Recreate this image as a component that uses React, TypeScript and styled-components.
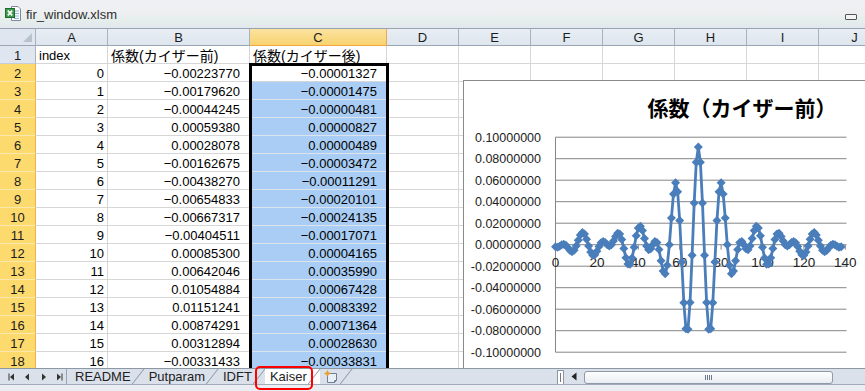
import React from "react";
import styled, { createGlobalStyle } from "styled-components";

const GlobalStyle = createGlobalStyle`
  html, body {
    margin: 0;
    padding: 0;
    background: #fff;
  }
  body {
    font-family: "Liberation Sans", "Noto Sans CJK JP", sans-serif;
    color: #000;
  }
`;

const LETTERS = ["A", "B", "C", "D", "E", "F", "G", "H", "I", "J"];

const B_VALUES = [
  "−0.00223770", "−0.00179620", "−0.00044245", "0.00059380", "0.00028078",
  "−0.00162675", "−0.00438270", "−0.00654833", "−0.00667317", "−0.00404511",
  "0.00085300", "0.00642046", "0.01054884", "0.01151241", "0.00874291",
  "0.00312894", "−0.00331433",
];
const C_VALUES = [
  "−0.00001327", "−0.00001475", "−0.00000481", "0.00000827", "0.00000489",
  "−0.00003472", "−0.00011291", "−0.00020101", "−0.00024135", "−0.00017071",
  "0.00004165", "0.00035990", "0.00067428", "0.00083392", "0.00071364",
  "0.00028630", "−0.00033831",
];

// band-pass coefficients (before kaiser window)
const TAPS = 139;
const MID = 69;
const W0 = 0.5612;
const HALF_BW = Math.PI / 22;
const coef = Array.from({ length: TAPS }, (_, n) => {
  const m = n - MID;
  if (m === 0) return (2 * HALF_BW) / Math.PI;
  return (Math.sin((W0 + HALF_BW) * m) - Math.sin((W0 - HALF_BW) * m)) / (Math.PI * m);
});

const Window = styled.div`
  position: relative;
  width: 865px;
  height: 391px;
  overflow: hidden;
  display: flex;
  flex-direction: column;
  background: #fff;
`;

const TitleBar = styled.div`
  height: 29px;
  flex-shrink: 0;
  box-sizing: border-box;
  display: flex;
  align-items: center;
  gap: 4px;
  padding: 0 8px 1px 5px;
  background: linear-gradient(#eff0f3 0%, #edeff1 50%, #e5eeeb 72%, #e3e7ee 100%);
  border-bottom: 1px solid #98a3b1;
`;

const FileName = styled.span`
  font-size: 13px;
  color: #2e2e2e;
  margin-top: 2px;
`;

const MinButton = styled.div`
  margin-left: auto;
  margin-top: 6px;
  width: 10px;
  height: 4px;
  border: 1px solid #555;
  border-radius: 1px;
  background: #f4f4f4;
`;

const SheetArea = styled.div`
  position: relative;
  height: 339px;
  flex-shrink: 0;
  overflow: hidden;
`;

const Grid = styled.div`
  display: grid;
  grid-template-columns: 36px 72px 142px 137px repeat(7, 72px);
  grid-template-rows: 17px;
  grid-auto-rows: 18px;
  width: max-content;
`;

const Corner = styled.div`
  position: relative;
  box-sizing: border-box;
  background: #dfe6ef;
  border-right: 1px solid #a9b3bf;
  border-bottom: 1px solid #9aa6b3;
  &::after {
    content: "";
    position: absolute;
    right: 3px;
    bottom: 3px;
    border-left: 9px solid transparent;
    border-bottom: 9px solid #b9c3ce;
  }
`;

const ColHead = styled.div<{ $active?: boolean }>`
  box-sizing: border-box;
  font-size: 13px;
  line-height: 16px;
  padding-top: 1px;
  text-align: center;
  color: #1c1c1c;
  background: ${(p) => (p.$active ? "linear-gradient(#fbe3a0, #f8d36f)" : "linear-gradient(#e9eef4, #dde5ee)")};
  border-right: 1px solid ${(p) => (p.$active ? "#e9a84a" : "#a9b3bf")};
  border-bottom: 1px solid ${(p) => (p.$active ? "#f0a83c" : "#9aa6b3")};
`;

const RowHead = styled.div<{ $active?: boolean }>`
  box-sizing: border-box;
  font-size: 13px;
  line-height: 16px;
  padding-top: 2px;
  text-align: center;
  color: #1c1c1c;
  background: ${(p) => (p.$active ? "#fdda6e" : "#dfe6ef")};
  border-right: 1px solid ${(p) => (p.$active ? "#eeb34c" : "#a9b3bf")};
  border-bottom: 1px solid ${(p) => (p.$active ? "#fbe8ae" : "#c5ced8")};
`;

const Cell = styled.div<{ $align?: "left" | "right"; $pad?: number; $fill?: boolean; $jp?: boolean }>`
  box-sizing: border-box;
  white-space: nowrap;
  overflow: visible;
  font-size: ${(p) => (p.$jp ? "14px" : "13px")};
  line-height: 16px;
  padding: 2px ${(p) => p.$pad ?? 3}px 0 3px;
  text-align: ${(p) => p.$align ?? "left"};
  background: ${(p) => (p.$fill ? "#a9cdf4" : "#fff")};
  border-right: 1px solid #d6d6d6;
  border-bottom: 1px solid ${(p) => (p.$fill ? "#dde3ea" : "#d6d6d6")};
`;

const SelectionFrame = styled.div`
  position: absolute;
  left: 249px;
  top: 34px;
  width: 140px;
  height: 400px;
  box-sizing: border-box;
  border: 3px solid #000;
  pointer-events: none;
`;

const ChartBox = styled.div`
  position: absolute;
  left: 463px;
  top: 51px;
  width: 430px;
  height: 310px;
  background: #fff;
  border: 1px solid #8a8a8a;
`;

const ChartTitle = styled.text`
  font-family: "Noto Sans CJK JP", sans-serif;
  font-weight: bold;
  font-size: 21px;
  fill: #000;
`;

const AxisLabel = styled.text<{ $size?: number }>`
  font-family: "Liberation Sans", sans-serif;
  font-size: ${(p) => p.$size ?? 12.5}px;
  fill: #222;
`;

const TabBar = styled.div`
  height: 16px;
  flex-shrink: 0;
  box-sizing: border-box;
  display: flex;
  align-items: stretch;
  background: #dae1ea;
  border-top: 1px solid #8d98a5;
`;

const NavGroup = styled.div`
  width: 67px;
  flex-shrink: 0;
  box-sizing: border-box;
  display: flex;
  align-items: center;
  gap: 9px;
  padding-left: 8px;
  border-right: 1px solid #9aa5b2;
`;

const Tab = styled.div<{ $active?: boolean; $first?: boolean }>`
  position: relative;
  flex-shrink: 0;
  font-size: 13px;
  line-height: 15px;
  color: #222;
  padding: 0 13px 0 ${(p) => (p.$first ? 8 : 5)}px;
  background: ${(p) => (p.$active ? "#fff" : "transparent")};
  &::after {
    content: "";
    position: absolute;
    right: 5px;
    top: -1px;
    bottom: 0;
    width: 1px;
    background: #8894a2;
    transform: skewX(-38deg);
  }
`;

const NewSheet = styled.div`
  position: relative;
  flex-shrink: 0;
  display: flex;
  align-items: center;
  padding: 0 14px 0 4px;
  &::after {
    content: "";
    position: absolute;
    right: 5px;
    top: -1px;
    bottom: 0;
    width: 1px;
    background: #8894a2;
    transform: skewX(-38deg);
  }
`;

const Spacer = styled.div`
  flex: 1;
`;

const HScroll = styled.div`
  width: 308px;
  flex-shrink: 0;
  display: flex;
  align-items: center;
`;

const SplitHandle = styled.div`
  width: 5px;
  height: 13px;
  margin-top: 1px;
  border: 1px solid #8b96a3;
  background: #fff;
  display: flex;
  justify-content: center;
  &::before {
    content: "";
    width: 1px;
    margin: 2px 0;
    background: #777;
  }
`;

const ArrowBtn = styled.div`
  width: 19px;
  display: flex;
  justify-content: center;
`;

const Thumb = styled.div`
  width: 249px;
  height: 13px;
  margin-left: 1px;
  margin-top: 1px;
  box-sizing: border-box;
  border: 1px solid #8e9aa8;
  border-radius: 3px;
  background: linear-gradient(#fdfdfe, #e9edf2);
  display: flex;
  justify-content: center;
  align-items: center;
  gap: 1px;
`;

const GripLine = styled.div`
  width: 1px;
  height: 5px;
  background: #6d7785;
`;

const BottomStrip = styled.div`
  flex: 1;
  background: #eaeef3;
  border-top: 1px solid #a3adb9;
`;

const Highlight = styled.div`
  position: absolute;
  left: 255px;
  top: 366px;
  width: 58px;
  height: 24px;
  box-sizing: border-box;
  border: 2.5px solid #ff0000;
  border-radius: 5px;
  pointer-events: none;
`;

function ExcelIcon() {
  return (
    <svg width="17" height="17" viewBox="0 0 17 17">
      <path d="M6.5 1.5 H13 L15.5 4 V15.5 H6.5 Z" fill="#fff" stroke="#7b8aa0" />
      <path d="M9 6 H14 M9 8.5 H14 M9 11 H14 M9 13.5 H14" stroke="#8fb2d8" />
      <rect x="0.5" y="3.5" width="9" height="9" fill="#3f9b4c" stroke="#1f6b2e" />
      <path d="M2.8 5.6 L7.2 10.4 M7.2 5.6 L2.8 10.4" stroke="#fff" strokeWidth="1.6" />
    </svg>
  );
}

function NavIcon({ kind }: { kind: "first" | "prev" | "next" | "last" }) {
  const left = kind === "first" || kind === "prev";
  const bar = kind === "first" || kind === "last";
  return (
    <svg width="7" height="8" viewBox="0 0 7 8">
      {left ? <path d={bar ? "M6 0.5 L2 4 L6 7.5 Z" : "M5 0.5 L1 4 L5 7.5 Z"} fill="#333" /> : <path d={bar ? "M1 0.5 L5 4 L1 7.5 Z" : "M2 0.5 L6 4 L2 7.5 Z"} fill="#333" />}
      {bar && <rect x={left ? 0.5 : 5.5} y="0.5" width="1" height="7" fill="#333" />}
    </svg>
  );
}

function NewSheetIcon() {
  return (
    <svg width="14" height="13" viewBox="0 0 14 13">
      <path d="M3.5 3.5 H12.5 V10.5 L10.5 12.5 H3.5 Z" fill="#e9eff6" stroke="#6f7f95" />
      <path d="M10.5 12.5 V10.5 H12.5" fill="none" stroke="#6f7f95" />
      <path d="M3.5 0.5 L4.3 2.6 L6.5 3.5 L4.3 4.4 L3.5 6.5 L2.7 4.4 L0.5 3.5 L2.7 2.6 Z" fill="#f6a623" stroke="#d4861a" strokeWidth="0.5" />
    </svg>
  );
}

function Chart() {
  const xp = (i: number) => 91.5 + i * 2.07;
  const yp = (v: number) => 163.7 - v * 1075;
  const grid = Array.from({ length: 11 }, (_, k) => (5 - k) * 2);
  const ticks = Array.from({ length: 8 }, (_, j) => j * 20);
  const pts = coef.map((v, i) => `${xp(i).toFixed(2)},${yp(v).toFixed(2)}`).join(" ");
  return (
    <ChartBox>
      <svg width="430" height="310">
        <ChartTitle x="278" y="35" textAnchor="middle">係数（カイザー前）</ChartTitle>
        {grid.map((g) => (
          <g key={g}>
            <line x1="91.5" x2="382.5" y1={yp(g / 100)} y2={yp(g / 100)} stroke="#868686" strokeWidth="1" />
            <AxisLabel x="77" y={yp(g / 100) + 4.5} textAnchor="end">
              {(g / 100).toFixed(8)}
            </AxisLabel>
          </g>
        ))}
        <line x1="91.5" x2="91.5" y1={yp(0.1)} y2={yp(-0.1)} stroke="#868686" strokeWidth="1" />
        {ticks.map((t) => (
          <g key={t}>
            <line x1={xp(t)} x2={xp(t)} y1={yp(0)} y2={yp(0) + 5} stroke="#868686" strokeWidth="1" />
            <AxisLabel $size={13.5} x={xp(t)} y={yp(0) + 22} textAnchor="middle">
              {t}
            </AxisLabel>
          </g>
        ))}
        <polyline points={pts} fill="none" stroke="#4a7ebb" strokeWidth="2.8" strokeLinejoin="round" />
        {coef.map((v, i) => {
          const x = xp(i);
          const y = yp(v);
          return <path key={i} d={`M${x} ${y - 4.5} L${x + 4.5} ${y} L${x} ${y + 4.5} L${x - 4.5} ${y} Z`} fill="#4a7ebb" />;
        })}
      </svg>
    </ChartBox>
  );
}

export default function App() {
  return (
    <Window>
      <GlobalStyle />
      <TitleBar>
        <ExcelIcon />
        <FileName>fir_window.xlsm</FileName>
        <MinButton />
      </TitleBar>

      <SheetArea>
        <Grid>
          <Corner />
          {LETTERS.map((l) => (
            <ColHead key={l} $active={l === "C"}>
              {l}
            </ColHead>
          ))}

          <RowHead>1</RowHead>
          <Cell>index</Cell>
          <Cell $jp>係数(カイザー前)</Cell>
          <Cell $jp>係数(カイザー後)</Cell>
          {LETTERS.slice(3).map((l) => (
            <Cell key={l} />
          ))}

          {B_VALUES.map((b, i) => (
            <React.Fragment key={i}>
              <RowHead $active>{i + 2}</RowHead>
              <Cell $align="right">{i}</Cell>
              <Cell $align="right" $pad={9}>
                {b}
              </Cell>
              <Cell $align="right" $pad={9} $fill={i > 0}>
                {C_VALUES[i]}
              </Cell>
              {LETTERS.slice(3).map((l) => (
                <Cell key={l} />
              ))}
            </React.Fragment>
          ))}
        </Grid>
        <SelectionFrame />
        <Chart />
      </SheetArea>

      <TabBar>
        <NavGroup>
          <NavIcon kind="first" />
          <NavIcon kind="prev" />
          <NavIcon kind="next" />
          <NavIcon kind="last" />
        </NavGroup>
        <Tab $first>README</Tab>
        <Tab>Putparam</Tab>
        <Tab>IDFT</Tab>
        <Tab $active>Kaiser</Tab>
        <NewSheet>
          <NewSheetIcon />
        </NewSheet>
        <Spacer />
        <HScroll>
          <SplitHandle />
          <ArrowBtn>
            <svg width="6" height="9" viewBox="0 0 6 9">
              <path d="M5.5 0.5 L0.5 4.5 L5.5 8.5 Z" fill="#222" />
            </svg>
          </ArrowBtn>
          <Thumb>
            <GripLine />
            <GripLine />
            <GripLine />
            <GripLine />
          </Thumb>
        </HScroll>
      </TabBar>
      <BottomStrip />
      <Highlight />
    </Window>
  );
}
